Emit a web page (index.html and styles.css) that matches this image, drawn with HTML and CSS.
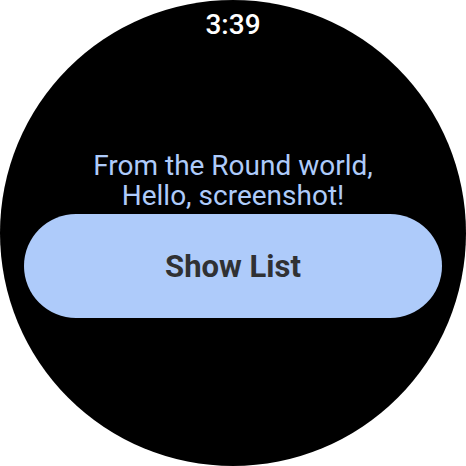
FILE: index.html
```html
<!DOCTYPE html>
<html>
<head>
<meta charset="utf-8">
<link rel="stylesheet" href="styles.css">
</head>
<body>
<div class="watch">
  <div class="time">3:39</div>
  <div class="greeting">From the Round world,<br>Hello, screenshot!</div>
  <div class="chip">Show List</div>
</div>
</body>
</html>
```
FILE: styles.css
```css
html, body {
  margin: 0;
  padding: 0;
  background: #ffffff;
}
.watch {
  width: 466px;
  height: 466px;
  border-radius: 50%;
  background: #000000;
  display: flex;
  flex-direction: column;
  align-items: center;
  font-family: Roboto, "Liberation Sans", sans-serif;
  box-sizing: border-box;
  padding-top: 8px;
}
.time {
  color: #ffffff;
  font-size: 28px;
  font-weight: 500;
  line-height: normal;
}
.greeting {
  margin-top: 110px;
  color: #aecbfa;
  font-size: 28px;
  line-height: 30px;
  text-align: center;
}
.chip {
  margin-top: 3px;
  width: 418px;
  height: 104px;
  border-radius: 52px;
  background: #aecbfa;
  color: #303133;
  font-size: 31px;
  font-weight: 700;
  display: flex;
  align-items: center;
  justify-content: center;
}
```
